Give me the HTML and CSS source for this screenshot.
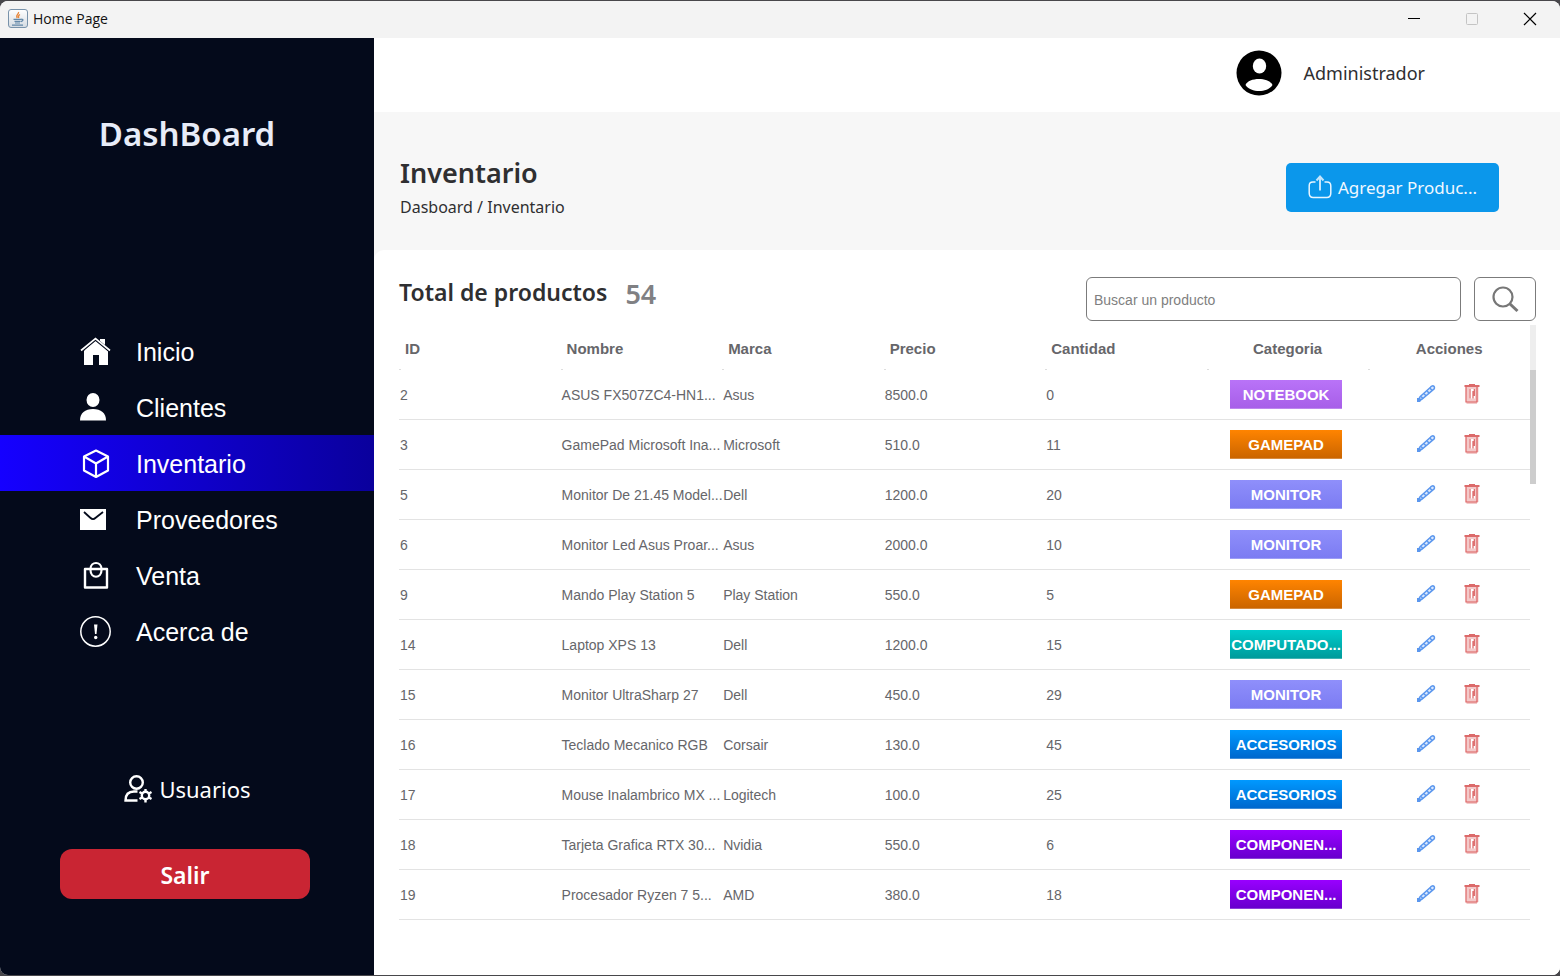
FILE: index.html
```html
<!DOCTYPE html>
<html lang="es">
<head>
<meta charset="utf-8">
<title>Home Page</title>
<link rel="stylesheet" href="styles.css">
</head>
<body>
<svg class="sprite" aria-hidden="true">
  <symbol id="pencil" viewBox="0 0 20 20">
    <path d="M2 16.500 4 12.800 14.500 3.200c1-1.500 2.600-1.700 3.500-.8s.5 2.700-1 3.500L6.300 15z" fill="#dce9fd" stroke="#5b97ee" stroke-width="1.500" stroke-linejoin="round"/>
    <path d="M5 12.500l2 2M8 9.800l2 2M11 7l2 2M14 4.300l2 2" fill="none" stroke="#5b97ee" stroke-width="1.500"/>
    <path d="M1 14h2.800l1.800 2L4 18H1z" fill="#5b97ee"/>
  </symbol>
  <symbol id="trash" viewBox="0 0 16 20">
    <path d="M2 3h12.500v15H13v2H2.500z" fill="#f3c9c9"/>
    <path d="M5 0h6v1h4.500v2H.5V1H5z" fill="#dc6a6a"/>
    <path d="M2 3v15h11V3" fill="none" stroke="#dc6060" stroke-width="1.200"/>
    <path d="M5 5h6v9.500H5z" fill="#fff"/>
    <path d="M6 5v9.500M9 7v7.500M10.300 5v7" fill="none" stroke="#dc6060" stroke-width="1.200"/>
  </symbol>
</svg>
<div class="window">
  <header class="titlebar">
    <svg class="java" width="20" height="20" viewBox="0 0 20 20">
      <defs><linearGradient id="tile" x1="0" y1="0" x2="0" y2="1"><stop offset="0" stop-color="#fff"/><stop offset="1" stop-color="#d4dbe2"/></linearGradient></defs>
      <rect x=".5" y=".5" width="19" height="18" rx="2.500" fill="url(#tile)" stroke="#7892aa"/>
      <path d="M10.500 3c1 2-3.500 2.800-1.200 6M12 5.500c-2 1-2 1.800-1.200 3.500" fill="none" stroke="#e8863a" stroke-width="1.300"/>
      <path d="M5.500 10.300h8M6.500 12.300h6M7 14h5M4 16.200h11M13.500 10.200c2.400 0 1.500 2-.6 2.400" fill="none" stroke="#6388a8" stroke-width="1.200"/>
    </svg>
    <span class="caption">Home Page</span>
    <button class="win" aria-label="Minimizar"><svg width="14" height="14" viewBox="0 0 14 14"><path d="M1 6.500h12" stroke="#000"/></svg></button>
    <button class="win" aria-label="Maximizar" disabled><svg width="14" height="14" viewBox="0 0 14 14"><rect x="1.500" y="1.500" width="11" height="11" rx="1" fill="none" stroke="#c4c4c4"/></svg></button>
    <button class="win" aria-label="Cerrar"><svg width="14" height="14" viewBox="0 0 14 14"><path d="M1 1l12 12M13 1 1 13" stroke="#000" stroke-width="1.200"/></svg></button>
  </header>
  <div class="app">
    <aside class="sidebar">
      <div class="brand">DashBoard</div>
      <nav class="menu">
        <a href="#"><svg viewBox="0 0 32 32"><path d="M5 13.500 15.500 4.500 20 8.300V3h5v9.500l3 2.500v14h-9V19h-6v10H4V15z" fill="#fff"/><path d="M1 14.500 15.500 2.500 30 14.500" fill="none" stroke="#040a1b" stroke-width="4"/><path d="M20 3h5v6l-5-4z" fill="#fff"/><path d="M1 14.500 15.500 2.500 30 14.500" fill="none" stroke="#fff" stroke-width="1.700"/></svg>Inicio</a>
        <a href="#"><svg viewBox="0 0 32 32"><ellipse cx="13" cy="8" rx="6.500" ry="7" fill="#fff"/><path d="M0 28.500C0 21 5 17 13 17s13 4 13 11.500z" fill="#fff"/></svg>Clientes</a>
        <a href="#" class="active" aria-current="page"><svg viewBox="0 0 32 32"><path d="M16 2.500 28 8.500v14L16 29 4 22.500v-14zM4 8.500l12 7 12-7M16 15.500V29" fill="none" stroke="#fff" stroke-width="2.200" stroke-linejoin="round"/></svg>Inventario</a>
        <a href="#"><svg viewBox="0 0 32 32"><path d="M0 5h26v21H0z" fill="#fff"/><path d="m4 8 6 5.500c2.500 2.200 3.500 2.200 6 0L23 8" fill="none" stroke="#040a1b" stroke-width="1.800"/></svg>Proveedores</a>
        <a href="#"><svg viewBox="0 0 32 32"><path d="M5 9h22v18.500H5z" fill="none" stroke="#fff" stroke-width="2.400" stroke-linejoin="round"/><path d="M10.500 9c0-8 11-8 11 0M10.500 10c0 9 11 9 11 0" fill="none" stroke="#fff" stroke-width="2.200"/></svg>Venta</a>
        <a href="#"><svg viewBox="0 0 32 32"><circle cx="15.500" cy="15.500" r="14.700" fill="none" stroke="#fff" stroke-width="1.500"/><path d="M14 8.500h3.500L16.500 18h-1.500z" fill="#fff"/><circle cx="15.700" cy="21.500" r="1.700" fill="#fff"/></svg>Acerca de</a>
      </nav>
      <a href="#" class="users"><svg width="30" height="30" viewBox="0 0 30 30"><circle cx="13.500" cy="8.500" r="6.300" fill="none" stroke="#fff" stroke-width="2.400"/><path d="M14.500 17.500H11c-6 0-8.500 3.500-8.500 9h12" fill="none" stroke="#fff" stroke-width="2.400"/><path d="M22.500 15v13.500M16.500 18l12 7M28.500 18l-12 7" stroke="#fff" stroke-width="2.400"/><circle cx="22.500" cy="21.500" r="3.700" fill="#040a1b" stroke="#fff" stroke-width="2.400"/></svg>Usuarios</a>
      <button class="exit">Salir</button>
    </aside>
    <main>
      <div class="topbar">
        <svg width="46" height="46" viewBox="0 0 46 46"><circle cx="23" cy="23" r="22.500" fill="#000"/><ellipse cx="23.500" cy="16" rx="6.700" ry="7.500" fill="#fff"/><path d="M9.500 35c3-8 23.500-8 27 0-5 8-21.500 8-27 0z" fill="#fff"/></svg>
        <span>Administrador</span>
      </div>
      <section class="heading">
        <div>
          <h1>Inventario</h1>
          <p>Dasboard / Inventario</p>
        </div>
        <button class="add"><svg width="24" height="24" viewBox="0 0 24 24"><path d="M7.500 7H5C2 7 1.200 8.500 1.200 11v7c0 3 1.300 4.500 4 4.500h13.600c2.700 0 4-1.500 4-4.500v-7c0-2.500-.8-4-3.800-4h-2.500" fill="none" stroke="#e8f5ff" stroke-width="1.500"/><path d="M12 15.500V2.500M8.500 5.500 12 1.500l3.500 4" fill="none" stroke="#c4e5fc" stroke-width="2"/></svg>Agregar Produc...</button>
      </section>
      <section class="card">
        <div class="tools">
          <h2>Total de productos</h2>
          <span class="count">54</span>
          <form class="search">
            <input type="text" aria-label="Buscar un producto" placeholder="Buscar un producto">
            <button type="button" aria-label="Buscar"><svg width="28" height="28" viewBox="0 0 28 28"><circle cx="12" cy="12" r="9.500" fill="none" stroke="#777" stroke-width="2.200"/><path d="m18.500 18.500 8 7.500" stroke="#777" stroke-width="3"/></svg></button>
          </form>
        </div>
        <div class="listing">
          <table>
            <thead><tr><th>ID</th><th>Nombre</th><th>Marca</th><th>Precio</th><th>Cantidad</th><th class="mid">Categoria</th><th class="mid">Acciones</th></tr></thead>
            <tbody>
              <tr><td>2</td><td>ASUS FX507ZC4-HN1...</td><td>Asus</td><td>8500.0</td><td>0</td><td><span class="badge notebook">NOTEBOOK</span></td><td><div class="actions"><button aria-label="Editar"><svg width="20" height="20"><use href="#pencil"/></svg></button><button aria-label="Eliminar"><svg width="16" height="20"><use href="#trash"/></svg></button></div></td></tr>
              <tr><td>3</td><td>GamePad Microsoft Ina...</td><td>Microsoft</td><td>510.0</td><td>11</td><td><span class="badge gamepad">GAMEPAD</span></td><td><div class="actions"><button aria-label="Editar"><svg width="20" height="20"><use href="#pencil"/></svg></button><button aria-label="Eliminar"><svg width="16" height="20"><use href="#trash"/></svg></button></div></td></tr>
              <tr><td>5</td><td>Monitor De 21.45 Model...</td><td>Dell</td><td>1200.0</td><td>20</td><td><span class="badge monitor">MONITOR</span></td><td><div class="actions"><button aria-label="Editar"><svg width="20" height="20"><use href="#pencil"/></svg></button><button aria-label="Eliminar"><svg width="16" height="20"><use href="#trash"/></svg></button></div></td></tr>
              <tr><td>6</td><td>Monitor Led Asus Proar...</td><td>Asus</td><td>2000.0</td><td>10</td><td><span class="badge monitor">MONITOR</span></td><td><div class="actions"><button aria-label="Editar"><svg width="20" height="20"><use href="#pencil"/></svg></button><button aria-label="Eliminar"><svg width="16" height="20"><use href="#trash"/></svg></button></div></td></tr>
              <tr><td>9</td><td>Mando Play Station 5</td><td>Play Station</td><td>550.0</td><td>5</td><td><span class="badge gamepad">GAMEPAD</span></td><td><div class="actions"><button aria-label="Editar"><svg width="20" height="20"><use href="#pencil"/></svg></button><button aria-label="Eliminar"><svg width="16" height="20"><use href="#trash"/></svg></button></div></td></tr>
              <tr><td>14</td><td>Laptop XPS 13</td><td>Dell</td><td>1200.0</td><td>15</td><td><span class="badge computer">COMPUTADO...</span></td><td><div class="actions"><button aria-label="Editar"><svg width="20" height="20"><use href="#pencil"/></svg></button><button aria-label="Eliminar"><svg width="16" height="20"><use href="#trash"/></svg></button></div></td></tr>
              <tr><td>15</td><td>Monitor UltraSharp 27</td><td>Dell</td><td>450.0</td><td>29</td><td><span class="badge monitor">MONITOR</span></td><td><div class="actions"><button aria-label="Editar"><svg width="20" height="20"><use href="#pencil"/></svg></button><button aria-label="Eliminar"><svg width="16" height="20"><use href="#trash"/></svg></button></div></td></tr>
              <tr><td>16</td><td>Teclado Mecanico RGB</td><td>Corsair</td><td>130.0</td><td>45</td><td><span class="badge accessory">ACCESORIOS</span></td><td><div class="actions"><button aria-label="Editar"><svg width="20" height="20"><use href="#pencil"/></svg></button><button aria-label="Eliminar"><svg width="16" height="20"><use href="#trash"/></svg></button></div></td></tr>
              <tr><td>17</td><td>Mouse Inalambrico MX ...</td><td>Logitech</td><td>100.0</td><td>25</td><td><span class="badge accessory">ACCESORIOS</span></td><td><div class="actions"><button aria-label="Editar"><svg width="20" height="20"><use href="#pencil"/></svg></button><button aria-label="Eliminar"><svg width="16" height="20"><use href="#trash"/></svg></button></div></td></tr>
              <tr><td>18</td><td>Tarjeta Grafica RTX 30...</td><td>Nvidia</td><td>550.0</td><td>6</td><td><span class="badge component">COMPONEN...</span></td><td><div class="actions"><button aria-label="Editar"><svg width="20" height="20"><use href="#pencil"/></svg></button><button aria-label="Eliminar"><svg width="16" height="20"><use href="#trash"/></svg></button></div></td></tr>
              <tr><td>19</td><td>Procesador Ryzen 7 5...</td><td>AMD</td><td>380.0</td><td>18</td><td><span class="badge component">COMPONEN...</span></td><td><div class="actions"><button aria-label="Editar"><svg width="20" height="20"><use href="#pencil"/></svg></button><button aria-label="Eliminar"><svg width="16" height="20"><use href="#trash"/></svg></button></div></td></tr>
            </tbody>
          </table>
          <div class="scrollbar"><div class="thumb"></div></div>
        </div>
      </section>
    </main>
  </div>
</div>
</body>
</html>
```
FILE: styles.css
```css
* { box-sizing: border-box; }

body {
  margin: 0;
  min-height: 100vh;
  padding: 1px 0;
  display: flex;
  background: #48474b;
  color: #2f2f31;
  font-family: "Noto Sans", sans-serif;
}

button, input { font: inherit; }
button { border: 0; padding: 0; cursor: pointer; }
a { color: inherit; text-decoration: none; }
h1, h2, p { margin: 0; }
svg { display: block; flex: none; }
.sprite { position: absolute; width: 0; height: 0; }

.window {
  flex: 1;
  display: flex;
  flex-direction: column;
  border-radius: 8px;
  overflow: hidden;
  background: #fff;
}

.titlebar {
  display: flex;
  align-items: center;
  height: 37px;
  padding: 0 1px 2px 8px;
  background: #f3f3f3;
  color: #111;
  font-family: "Open Sans", sans-serif;
  font-size: 14px;
}
.caption { flex: 1; padding-left: 5px; }
.win {
  display: grid;
  place-items: center;
  width: 58px;
  height: 35px;
  background: none;
}

.app {
  flex: 1;
  display: grid;
  grid-template-columns: 374px 1fr;
}

.sidebar {
  display: flex;
  flex-direction: column;
  padding-top: 72px;
  background: #040a1b;
  color: #fff;
}
.brand {
  height: 48px;
  line-height: 48px;
  text-align: center;
  color: #e8ecf8;
  font-size: 33px;
  font-weight: 600;
}
.menu {
  margin-top: 165px;
  font-family: "Liberation Sans", sans-serif;
  font-size: 25px;
}
.menu a {
  display: flex;
  align-items: center;
  gap: 24px;
  height: 56px;
  padding: 2px 0 0 80px;
}
.menu svg { width: 32px; height: 32px; }
.menu .active { background: linear-gradient(90deg, #1500ff, #0a009c); }
.users {
  display: flex;
  align-items: center;
  justify-content: center;
  gap: 6px;
  height: 40px;
  margin-top: 110px;
  font-size: 22px;
}
.exit {
  width: 250px;
  height: 50px;
  margin: 40px 0 40px 60px;
  padding-top: 2px;
  border-radius: 12px;
  background: #c92533;
  color: #fff;
  font-size: 23px;
  font-weight: 600;
}

main {
  display: flex;
  flex-direction: column;
  min-width: 0;
  background: #f7f7f7;
}
.topbar {
  display: flex;
  align-items: center;
  justify-content: flex-end;
  gap: 22px;
  height: 74px;
  padding: 0 135px 4px 0;
  background: #fff;
  font-size: 18px;
}
.heading {
  display: flex;
  align-items: center;
  justify-content: space-between;
  height: 138px;
  padding: 0 61px 0 26px;
}
.heading > div { padding-top: 12px; }
h1 { font-size: 27px; line-height: 40px; font-weight: 600; }
.heading p { font-size: 16px; line-height: 28px; }
.add {
  display: flex;
  align-items: center;
  justify-content: center;
  gap: 6px;
  width: 213px;
  height: 49px;
  margin-top: 12px;
  border-radius: 5px;
  background: #0b97eb;
  color: #f0f8ff;
  font-size: 17px;
}

.card {
  flex: 1;
  padding: 27px 24px 24px 25px;
  border-top-left-radius: 10px;
  background: #fff;
}
.tools { display: flex; }
h2 { font-size: 23px; line-height: 30px; font-weight: 600; }
.count {
  padding-left: 18px;
  color: #808083;
  font-size: 27px;
  line-height: 34px;
  font-weight: 600;
}
.search {
  display: flex;
  gap: 13px;
  margin-left: auto;
}
.search input, .search button {
  height: 44px;
  border: 1px solid #7b7b7b;
  border-radius: 6px;
  background: #fff;
}
.search input {
  width: 375px;
  padding: 2px 7px 0;
  font-family: "Liberation Sans", sans-serif;
  font-size: 14px;
}
.search input::placeholder { color: #7f7f7f; opacity: 1; }
.search button { display: grid; place-items: center; width: 62px; }

.listing { display: flex; margin-top: 4px; }
table {
  flex: 1;
  width: 100%;
  min-width: 0;
  table-layout: fixed;
  border-collapse: separate;
  border-spacing: 0;
  font-family: "Liberation Sans", sans-serif;
  font-size: 14px;
  color: #66666a;
}
th {
  height: 45px;
  padding: 2px 0 0 6px;
  background: linear-gradient(#ddd, #ddd) left bottom / 2px 1px no-repeat;
  font-size: 15px;
  text-align: left;
}
th.mid { padding-left: 0; text-align: center; }
td {
  height: 50px;
  padding: 0 4px 0 1px;
  border-bottom: 1px solid #e3e3e3;
  overflow: hidden;
  white-space: nowrap;
}
.badge {
  display: block;
  width: 112px;
  margin: 0 auto;
  padding-top: 1px;
  box-shadow: inset 0 -1px #ffffff40;
  color: #fff;
  font-size: 15px;
  font-weight: 700;
  line-height: 28px;
  text-align: center;
}
.notebook { background: linear-gradient(#b973f8, #a75ee8); }
.gamepad { background: linear-gradient(#ff8400, #c96400); }
.monitor { background: linear-gradient(#8f8ffb, #7b7bf2); }
.computer { background: linear-gradient(#00cccc, #009999); }
.accessory { background: linear-gradient(#0099ff, #0066cc); }
.component { background: linear-gradient(#9900ff, #6600cc); }
.actions { display: flex; justify-content: center; gap: 28px; padding-bottom: 2px; }
.actions button { background: none; }

.scrollbar { flex: none; width: 6px; }
.scrollbar::before { content: ""; display: block; height: 45px; background: #eee; }
.thumb { height: 114px; background: #cdcdcd; }
```
